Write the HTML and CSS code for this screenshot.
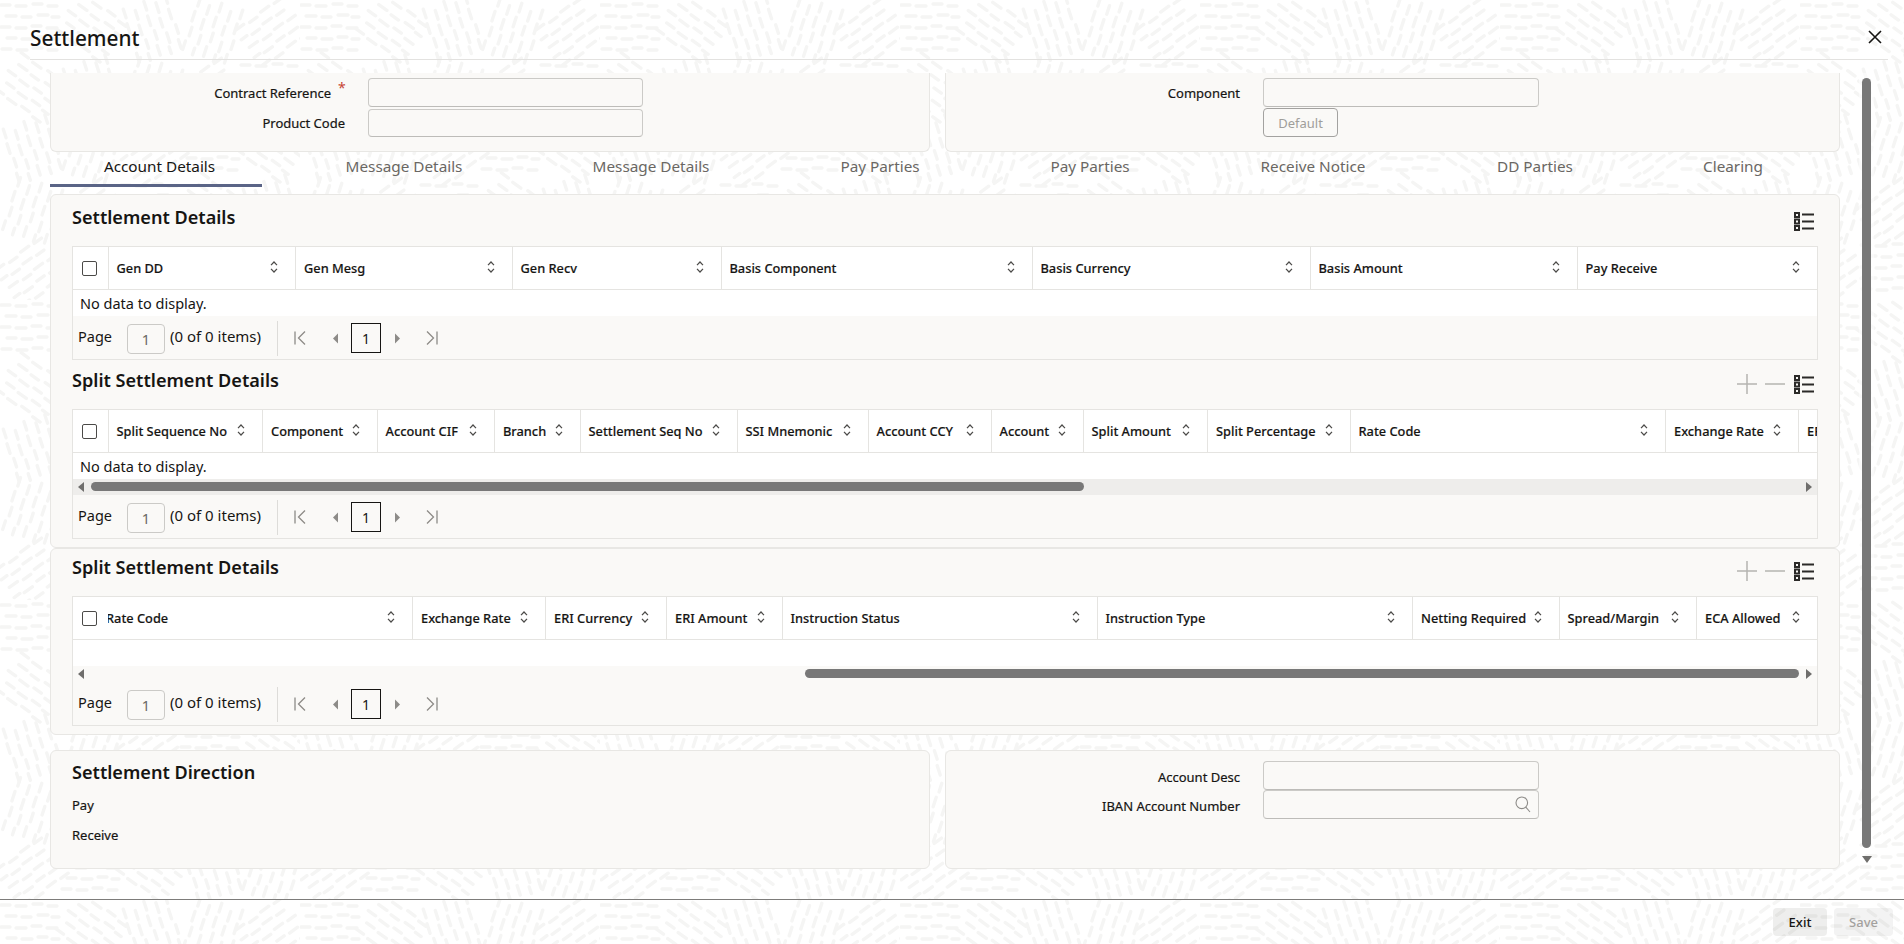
FILE: index.html
```html
<!DOCTYPE html>
<html lang="en">
<head>
<meta charset="utf-8">
<title>Settlement</title>
<link rel="stylesheet" href="styles.css">
</head>
<body>
<svg class="defs" aria-hidden="true">
  <symbol id="i-sort" viewBox="0 0 8 14"><path d="M1 5.2 4 2l3 3.2M1 8.8 4 12l3-3.2" fill="none" stroke="#4b4a48" stroke-width="1.2"/></symbol>
  <symbol id="i-list" viewBox="0 0 21 19"><path d="M1 0h6v6H1zM1 6.500h6v6H1zM1 13h6v6H1z" fill="#2b2a28"/><path d="M3 2h2v2H3zM3 8.500h2v2H3zM3 15h2v2H3z" fill="#f9f8f6"/><path d="M9 2.500h12M9 9.500h12M9 16.500h12" stroke="#2b2a28" stroke-width="1.800"/></symbol>
  <symbol id="i-plus" viewBox="0 0 20 20"><path d="M0 10h20M10 0v20" stroke="#b5b4b1" stroke-width="1.500"/></symbol>
  <symbol id="i-minus" viewBox="0 0 20 20"><path d="M0 10h20" stroke="#b5b4b1" stroke-width="1.500"/></symbol>
  <symbol id="i-first" viewBox="0 0 20 20"><path d="M5 3.500v13M15 3.500 8.500 10l6.500 6.500" fill="none" stroke="#8d8b88" stroke-width="1.300"/></symbol>
  <symbol id="i-prev" viewBox="0 0 20 20"><path d="M13 5.500v10L8 10.500z" fill="#8d8b88"/></symbol>
  <symbol id="i-next" viewBox="0 0 20 20"><path d="M8 5.500v10l5-5z" fill="#8d8b88"/></symbol>
  <symbol id="i-last" viewBox="0 0 20 20"><path d="M15 3.500v13M5 3.500l6.500 6.500L5 16.500" fill="none" stroke="#8d8b88" stroke-width="1.300"/></symbol>
</svg>

<div class="app">
  <header class="head">
    <h1 class="title">Settlement</h1>
    <button class="close" aria-label="Close"><svg width="14" height="14" viewBox="0 0 14 14"><path d="M1 1l12 12M13 1 1 13" stroke="#161513" stroke-width="1.600"/></svg></button>
  </header>

  <div class="body">
    <main class="content">
      <div class="two top-row">
        <section class="panel panel-top">
          <div class="field"><label class="lbl">Contract Reference<span class="req">*</span></label><input class="inp inp-left"></div>
          <div class="field field-2"><label class="lbl">Product Code</label><input class="inp inp-left inp-short"></div>
        </section>
        <section class="panel panel-top">
          <div class="field"><label class="lbl">Component</label><input class="inp"></div>
          <div class="field field-btn"><span class="lbl"></span><button class="btn-default">Default</button></div>
        </section>
      </div>

      <nav class="tabs">
        <a class="tab active">Account Details</a>
        <a class="tab">Message Details</a>
        <a class="tab">Message Details</a>
        <a class="tab">Pay Parties</a>
        <a class="tab">Pay Parties</a>
        <a class="tab">Receive Notice</a>
        <a class="tab">DD Parties</a>
        <a class="tab">Clearing</a>
      </nav>

      <section class="panel panel-main">
        <div class="sec-head sec-head-first">
          <h2 class="sec-title">Settlement Details</h2>
          <div class="tools"><svg class="ic-list"><use href="#i-list"/></svg></div>
        </div>
        <div class="tbl">
          <div class="thead">
            <div class="th-check"><span class="check"></span></div>
            <div class="th-scroll"><div class="cols cols-1">
              <div class="th"><span>Gen DD</span><svg class="sort"><use href="#i-sort"/></svg></div>
              <div class="th"><span>Gen Mesg</span><svg class="sort"><use href="#i-sort"/></svg></div>
              <div class="th"><span>Gen Recv</span><svg class="sort"><use href="#i-sort"/></svg></div>
              <div class="th"><span>Basis Component</span><svg class="sort"><use href="#i-sort"/></svg></div>
              <div class="th"><span>Basis Currency</span><svg class="sort"><use href="#i-sort"/></svg></div>
              <div class="th"><span>Basis Amount</span><svg class="sort"><use href="#i-sort"/></svg></div>
              <div class="th"><span>Pay Receive</span><svg class="sort"><use href="#i-sort"/></svg></div>
            </div></div>
          </div>
          <div class="row">No data to display.</div>
          <div class="pager">
            <span class="pg-label">Page</span><input class="pg-input" value="1"><span class="pg-count">(0 of 0 items)</span><span class="pg-sep"></span>
            <svg class="pg-ico pg-first"><use href="#i-first"/></svg><svg class="pg-ico pg-prev"><use href="#i-prev"/></svg><span class="pg-cur">1</span><svg class="pg-ico pg-next"><use href="#i-next"/></svg><svg class="pg-ico pg-last"><use href="#i-last"/></svg>
          </div>
        </div>

        <div class="sec-head">
          <h2 class="sec-title">Split Settlement Details</h2>
          <div class="tools"><svg class="ic-pm"><use href="#i-plus"/></svg><svg class="ic-pm"><use href="#i-minus"/></svg><svg class="ic-list"><use href="#i-list"/></svg></div>
        </div>
        <div class="tbl">
          <div class="thead">
            <div class="th-check"><span class="check"></span></div>
            <div class="th-scroll"><div class="cols cols-2">
              <div class="th"><span>Split Sequence No</span><svg class="sort"><use href="#i-sort"/></svg></div>
              <div class="th"><span>Component</span><svg class="sort"><use href="#i-sort"/></svg></div>
              <div class="th"><span>Account CIF</span><svg class="sort"><use href="#i-sort"/></svg></div>
              <div class="th"><span>Branch</span><svg class="sort"><use href="#i-sort"/></svg></div>
              <div class="th"><span>Settlement Seq No</span><svg class="sort"><use href="#i-sort"/></svg></div>
              <div class="th"><span>SSI Mnemonic</span><svg class="sort"><use href="#i-sort"/></svg></div>
              <div class="th"><span>Account CCY</span><svg class="sort"><use href="#i-sort"/></svg></div>
              <div class="th"><span>Account</span><svg class="sort"><use href="#i-sort"/></svg></div>
              <div class="th"><span>Split Amount</span><svg class="sort"><use href="#i-sort"/></svg></div>
              <div class="th"><span>Split Percentage</span><svg class="sort"><use href="#i-sort"/></svg></div>
              <div class="th"><span>Rate Code</span><svg class="sort"><use href="#i-sort"/></svg></div>
              <div class="th"><span>Exchange Rate</span><svg class="sort"><use href="#i-sort"/></svg></div>
              <div class="th"><span>ERI Currency</span><svg class="sort"><use href="#i-sort"/></svg></div>
            </div></div>
          </div>
          <div class="row">No data to display.</div>
          <div class="hbar hbar-track">
            <svg class="hbar-arrow" width="8" height="10" viewBox="0 0 8 10"><path d="M7 0v10L1 5z" fill="#6f6e6c"/></svg>
            <span class="hbar-thumb thumb-left"></span>
            <svg class="hbar-arrow arrow-end" width="8" height="10" viewBox="0 0 8 10"><path d="M1 0v10l6-5z" fill="#6f6e6c"/></svg>
          </div>
          <div class="pager">
            <span class="pg-label">Page</span><input class="pg-input" value="1"><span class="pg-count">(0 of 0 items)</span><span class="pg-sep"></span>
            <svg class="pg-ico pg-first"><use href="#i-first"/></svg><svg class="pg-ico pg-prev"><use href="#i-prev"/></svg><span class="pg-cur">1</span><svg class="pg-ico pg-next"><use href="#i-next"/></svg><svg class="pg-ico pg-last"><use href="#i-last"/></svg>
          </div>
        </div>
      </section>

      <section class="panel panel-split">
        <div class="sec-head sec-head-tight">
          <h2 class="sec-title">Split Settlement Details</h2>
          <div class="tools"><svg class="ic-pm"><use href="#i-plus"/></svg><svg class="ic-pm"><use href="#i-minus"/></svg><svg class="ic-list"><use href="#i-list"/></svg></div>
        </div>
        <div class="tbl">
          <div class="thead">
            <div class="th-check"><span class="check"></span></div>
            <div class="th-scroll"><div class="cols cols-3">
              <div class="th"><span>Rate Code</span><svg class="sort"><use href="#i-sort"/></svg></div>
              <div class="th"><span>Exchange Rate</span><svg class="sort"><use href="#i-sort"/></svg></div>
              <div class="th"><span>ERI Currency</span><svg class="sort"><use href="#i-sort"/></svg></div>
              <div class="th"><span>ERI Amount</span><svg class="sort"><use href="#i-sort"/></svg></div>
              <div class="th"><span>Instruction Status</span><svg class="sort"><use href="#i-sort"/></svg></div>
              <div class="th"><span>Instruction Type</span><svg class="sort"><use href="#i-sort"/></svg></div>
              <div class="th"><span>Netting Required</span><svg class="sort"><use href="#i-sort"/></svg></div>
              <div class="th"><span>Spread/Margin</span><svg class="sort"><use href="#i-sort"/></svg></div>
              <div class="th"><span>ECA Allowed</span><svg class="sort"><use href="#i-sort"/></svg></div>
            </div></div>
          </div>
          <div class="row"></div>
          <div class="hbar">
            <svg class="hbar-arrow" width="8" height="10" viewBox="0 0 8 10"><path d="M7 0v10L1 5z" fill="#6f6e6c"/></svg>
            <span class="hbar-thumb thumb-right"></span>
            <svg class="hbar-arrow arrow-end" width="8" height="10" viewBox="0 0 8 10"><path d="M1 0v10l6-5z" fill="#6f6e6c"/></svg>
          </div>
          <div class="pager">
            <span class="pg-label">Page</span><input class="pg-input" value="1"><span class="pg-count">(0 of 0 items)</span><span class="pg-sep"></span>
            <svg class="pg-ico pg-first"><use href="#i-first"/></svg><svg class="pg-ico pg-prev"><use href="#i-prev"/></svg><span class="pg-cur">1</span><svg class="pg-ico pg-next"><use href="#i-next"/></svg><svg class="pg-ico pg-last"><use href="#i-last"/></svg>
          </div>
        </div>
      </section>

      <div class="two bottom-row">
        <section class="panel panel-bottom">
          <h2 class="sec-title">Settlement Direction</h2>
          <div class="dir">Pay</div>
          <div class="dir">Receive</div>
        </section>
        <section class="panel panel-bottom panel-bottom-r">
          <div class="field"><label class="lbl">Account Desc</label><input class="inp inp-desc"></div>
          <div class="field field-iban"><label class="lbl">IBAN Account Number</label>
            <span class="lookup"><input class="inp inp-desc"><svg class="search" width="16" height="17" viewBox="0 0 16 17"><circle cx="6.800" cy="6.800" r="5.800" fill="none" stroke="#8d8b88" stroke-width="1.100"/><path d="M10.800 11.200 15 16" stroke="#8d8b88" stroke-width="1.100"/></svg></span>
          </div>
        </section>
      </div>
    </main>

    <aside class="rail">
      <span class="rail-thumb"></span>
      <svg class="rail-arrow" width="10" height="8" viewBox="0 0 10 8"><path d="M0 0h10L5 7z" fill="#6f6e6c"/></svg>
    </aside>
  </div>

  <footer class="foot">
    <button class="fbtn">Exit</button>
    <button class="fbtn fbtn-off">Save</button>
  </footer>
</div>
</body>
</html>
```
FILE: styles.css
```css
* { box-sizing: border-box; }
html, body { margin: 0; height: 100%; }
body {
  overflow: hidden;
  font-family: "Noto Sans", "Open Sans", sans-serif;
  font-size: 13px;
  color: #161513;
  background-color: #fff;
  background-image: url("data:image/svg+xml,<svg xmlns='http://www.w3.org/2000/svg' width='300' height='300'><defs><path id='g' fill='none' stroke='%23f5f5f4' stroke-width='3.400' stroke-linecap='round' d='M-29-25h9M-14-24h10M3-26h9M18-24h9M-24-14h10M-8-13h9M8-15h10M22-13h7M-29-3h9M-14-2h10M2-4h9M17-2h10M-23 8h9M-8 9h10M8 7h9M22 9h7M-28 19h9M-13 20h10M3 18h9M18 20h9'/></defs><use href='%23g' transform='translate(30 30) rotate(0)'/><use href='%23g' transform='translate(90 30) rotate(36)'/><use href='%23g' transform='translate(150 30) rotate(72)'/><use href='%23g' transform='translate(210 30) rotate(108)'/><use href='%23g' transform='translate(270 30) rotate(144)'/><use href='%23g' transform='translate(30 90) rotate(36)'/><use href='%23g' transform='translate(90 90) rotate(72)'/><use href='%23g' transform='translate(150 90) rotate(108)'/><use href='%23g' transform='translate(210 90) rotate(144)'/><use href='%23g' transform='translate(270 90) rotate(0)'/><use href='%23g' transform='translate(30 150) rotate(72)'/><use href='%23g' transform='translate(90 150) rotate(108)'/><use href='%23g' transform='translate(150 150) rotate(144)'/><use href='%23g' transform='translate(210 150) rotate(0)'/><use href='%23g' transform='translate(270 150) rotate(36)'/><use href='%23g' transform='translate(30 210) rotate(108)'/><use href='%23g' transform='translate(90 210) rotate(144)'/><use href='%23g' transform='translate(150 210) rotate(0)'/><use href='%23g' transform='translate(210 210) rotate(36)'/><use href='%23g' transform='translate(270 210) rotate(72)'/><use href='%23g' transform='translate(30 270) rotate(144)'/><use href='%23g' transform='translate(90 270) rotate(0)'/><use href='%23g' transform='translate(150 270) rotate(36)'/><use href='%23g' transform='translate(210 270) rotate(72)'/><use href='%23g' transform='translate(270 270) rotate(108)'/></svg>");
}
.defs { display: none; }
.app { display: flex; flex-direction: column; height: 944px; }

/* header */
.head {
  flex: 0 0 60px;
  margin: 0 16px 0 30px;
  display: flex;
  align-items: flex-start;
  justify-content: space-between;
  border-bottom: 1px solid #e3e2e0;
}
.title { margin: 24px 0 0; font-size: 20.800px; line-height: 28px; font-weight: 500; }
.close { margin: 30px 6px 0 0; padding: 0; width: 14px; height: 14px; border: 0; background: none; display: block; }
.close svg { display: block; }

/* body */
.body { flex: 1 1 0; min-height: 0; display: flex; }
.content { width: 1840px; padding: 13px 0 0 50px; }
.two { display: grid; grid-template-columns: 880px 895px; column-gap: 15px; }

.panel { background: #faf9f7; border: 1px solid #e8e7e4; border-radius: 6px; }

/* top form */
.panel-top { height: 79px; padding-top: 5px; border-top: 0; border-top-left-radius: 0; border-top-right-radius: 0; }
.field { display: grid; grid-template-columns: 294px 276px; column-gap: 23px; align-items: center; }
.field-2 { margin-top: 2px; }
.field-btn { margin-top: 1px; }
.lbl { text-align: right; font-size: 13px; font-weight: 400; line-height: 18px; color: #161513; -webkit-text-stroke: .2px #161513; }
.req { display: inline-block; width: 14px; margin-left: 0; padding-left: 7px; text-align: left; color: #c74634; font-size: 14px; line-height: 0; vertical-align: 5px; -webkit-text-stroke: 0; }
.inp {
  display: block; width: 276px; height: 29px; padding: 0 8px;
  background: #faf9f7; border: 1px solid #cbcac7; border-bottom-color: #bdbcb9; border-radius: 4px; outline: 0;
  font: inherit;
}
.inp-left { width: 275px; }
.inp-short { height: 28px; }
.btn-default {
  justify-self: start; width: 75px; height: 29px; padding: 0;
  background: #faf9f7; border: 1px solid #a3a2a0; border-radius: 4px;
  font: inherit; color: #a09e9b;
}
.field-btn .lbl { display: block; }

/* tabs */
.tabs {
  height: 42px;
  display: grid;
  grid-template-columns: 212px 284px 210px 248px 172px 274px 170px 226px;
  align-items: start;
}
.tab {
  height: 35px; padding-top: 3px; text-align: center;
  font-size: 15.300px; line-height: 22px; color: #6a6763;
  border-bottom: 3px solid transparent;
}
.tab.active { color: #161513; padding-left: 7px; border-bottom-color: #5a6486; }

/* main panels */
.panel-main { height: 354px; padding: 0 21px; }
.panel-split { height: 187px; padding: 0 21px; }
.sec-head { height: 49px; padding: 8px 4px 0 0; display: flex; justify-content: space-between; align-items: flex-start; }
.sec-head-first { height: 51px; padding-top: 10px; }
.sec-head-tight { height: 47px; padding-top: 6px; }
.sec-title { margin: 0; font-size: 18.100px; line-height: 24px; font-weight: 600; }
.tools { display: flex; align-items: center; margin-top: 6px; gap: 8px; }
.sec-head-first .tools { margin-top: 7px; }
.ic-list { width: 21px; height: 19px; display: block; }
.ic-pm { width: 20px; height: 20px; display: block; }

/* table */
.tbl { border: 1px solid #e5e4e1; background: #faf9f7; }
.thead { display: flex; height: 43px; background: #fff; border-bottom: 1px solid #e5e4e1; }
.th-check { flex: 0 0 34.500px; display: flex; align-items: center; justify-content: center; padding-right: 2px; background: #fff; }
.check { display: block; width: 15px; height: 15px; border: 1.500px solid #4b4a48; border-radius: 2px; }
.th-scroll { flex: 1 1 0; min-width: 0; overflow: hidden; }
.cols { display: grid; height: 42px; }
.cols-1 { grid-template-columns: 187.500px 216.500px 209px 311px 278px 267px 1fr; }
.cols-2 { grid-template-columns: 154.500px 114.500px 117.500px 85.500px 157px 131px 123px 92px 124.500px 142.500px 315.500px 133px 120px; }
.cols-3 { grid-template-columns: 315px 133px 121px 115.500px 315px 315.500px 146.500px 137.500px 120.500px; margin-left: -10.500px; }
.th {
  display: flex; align-items: center; justify-content: space-between;
  padding: 0 17px 0 8px; min-width: 0;
  border-left: 1px solid #e5e4e1;
  font-size: 12.800px; font-weight: 500; white-space: nowrap; background: #fff;
  -webkit-text-stroke: .15px #161513;
}
.sort { width: 8px; height: 14px; display: block; flex: none; margin-top: -2px; }
.row { height: 26px; padding-left: 7px; background: #fff; font-size: 14.500px; line-height: 26px; }

/* horizontal bar */
.hbar { height: 16px; display: flex; align-items: center; padding: 0 4px 1px; position: relative; }
.hbar-track { background: #eeedeb; }
.hbar-arrow { display: block; flex: none; }
.arrow-end { margin-left: auto; }
.hbar-thumb { display: block; height: 9px; background: #787878; border-radius: 5px; }
.thumb-left { width: 993px; margin-left: 6px; }
.thumb-right { width: 994px; margin-left: 720px; }

/* pager */
.pager { height: 43px; padding: 0 0 0 5px; display: flex; align-items: center; font-size: 14.500px; white-space: nowrap; }
.pg-label { width: 49px; margin-bottom: 3px; }
.pg-input {
  width: 38px; height: 30px; padding: 0; text-align: center; margin-top: 2px;
  background: #faf9f7; border: 1px solid #cbcac7; border-radius: 4px; outline: 0;
  font: inherit; color: #6a6763;
}
.pg-count { margin-left: 5px; width: 92px; font-size: 15px; margin-bottom: 3px; }
.pg-sep { width: 1px; height: 35px; margin-left: 15px; background: #dddcd9; margin-top: 2px; }
.pg-ico { width: 20px; height: 20px; display: block; flex: none; margin-top: 1px; }
.pg-first { margin-left: 12px; }
.pg-prev { margin-left: 15px; }
.pg-cur { margin-left: 6px; width: 30px; height: 30px; border: 1px solid #161513; text-align: center; line-height: 30px; font-size: 14px; }
.pg-next { margin-left: 6px; }
.pg-last { margin-left: 15px; }

/* bottom */
.bottom-row { margin-top: 15px; }
.panel-bottom { height: 119px; padding: 9px 21px 0; }
.panel-bottom .sec-title { margin-bottom: 6px; }
.dir { height: 30px; font-size: 13px; font-weight: 400; line-height: 30px; -webkit-text-stroke: .2px #161513; }
.panel-bottom-r { padding: 10px 0 0; }
.panel-bottom-r .lbl { padding-top: 2px; }
.inp-desc { height: 29px; }
.field-iban { margin-top: 0; }
.lookup { display: block; position: relative; width: 276px; }
.search { position: absolute; right: 8px; top: 6px; }

/* page scroll rail */
.rail {
  flex: 0 0 15px; margin-left: 19px; padding-top: 18px;
  display: flex; flex-direction: column; align-items: center;
  background: linear-gradient(rgba(255,255,255,.55) 489px, transparent 489px) no-repeat 0 13px;
}
.rail-thumb { display: block; width: 9px; height: 770px; background: #787878; border-radius: 4.500px; }
.rail-arrow { display: block; margin-top: 8px; }

/* footer */
.foot { flex: 0 0 45px; border-top: 1px solid #7d7c7a; display: flex; justify-content: flex-end; padding: 8px 11px 0 0; gap: 7px; }
.fbtn { width: 54px; height: 28px; padding: 0; border: 0; border-radius: 4px; background: rgba(22,21,19,.075); font: inherit; font-weight: 500; color: #161513; }
.fbtn-off { width: 59px; background: rgba(22,21,19,.05); color: #a3a19e; }
```
